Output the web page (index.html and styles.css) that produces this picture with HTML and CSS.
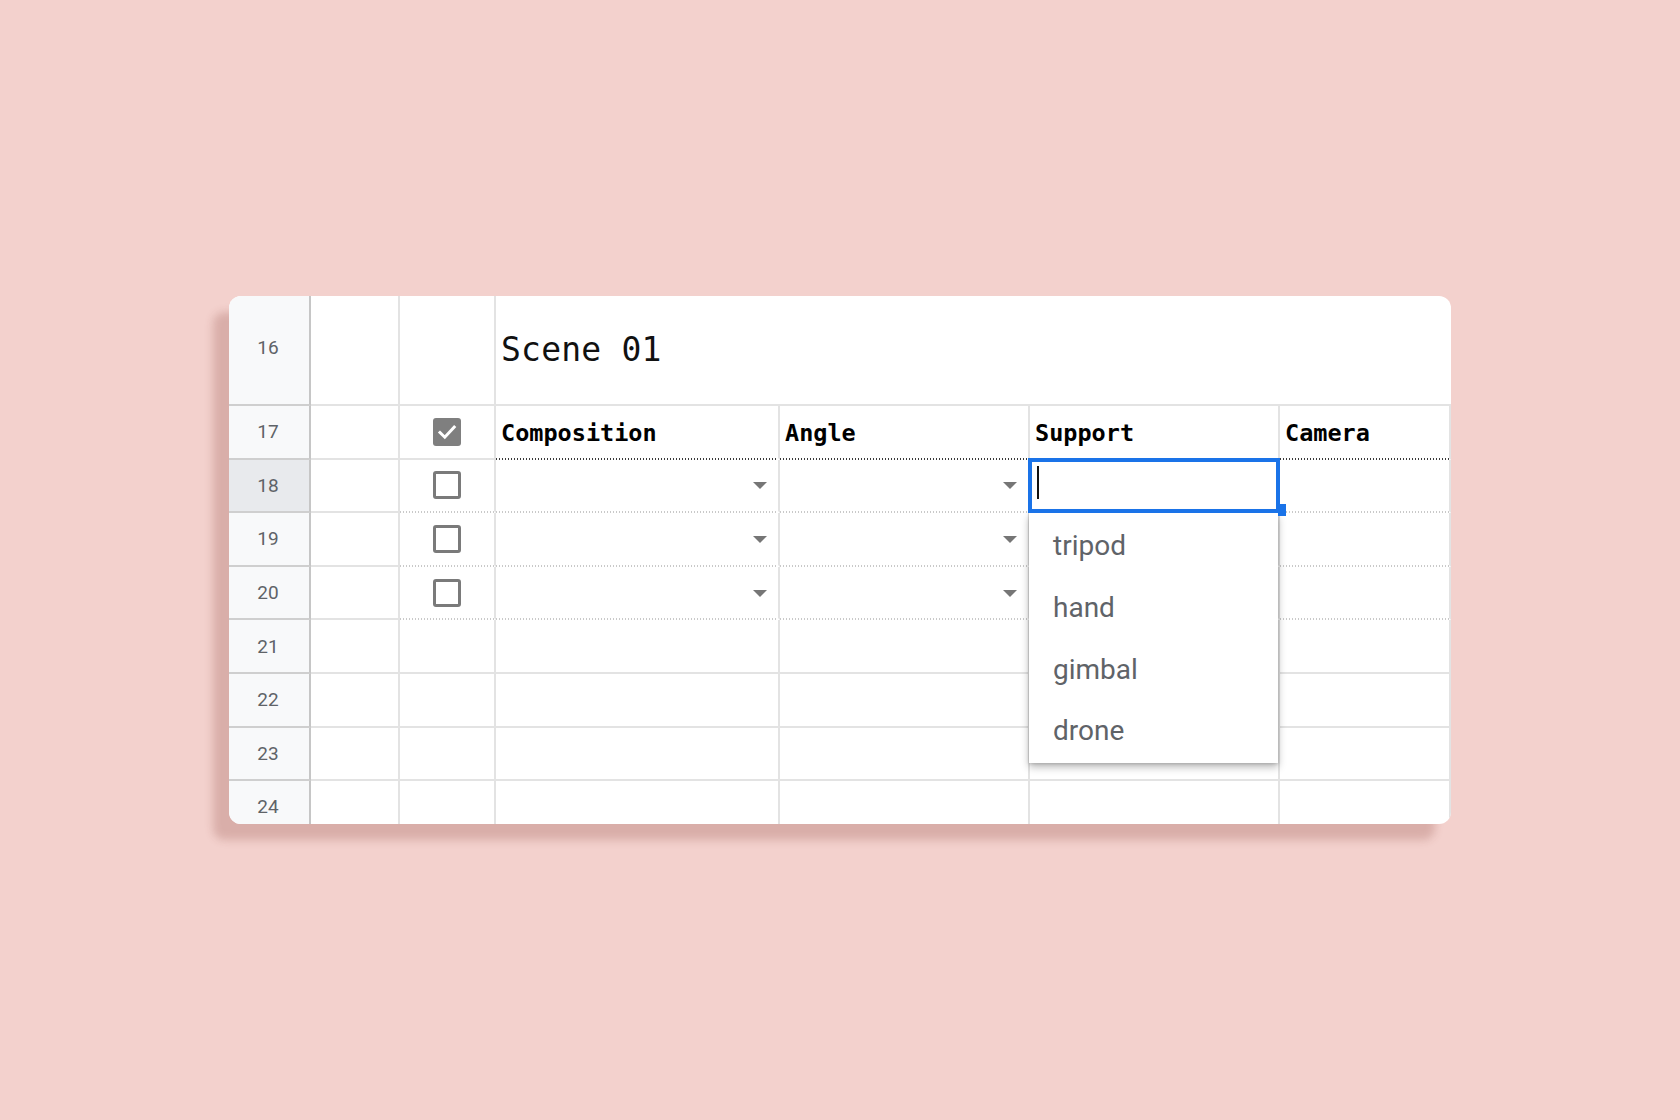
FILE: index.html
```html
<!DOCTYPE html>
<html>
<head>
<meta charset="utf-8">
<link rel="stylesheet" href="styles.css">
</head>
<body>
<div class="card">
  <div class="grid">
    <!-- row 16 -->
    <div class="rh up">16</div>
    <div class="c"></div>
    <div class="c"></div>
    <div class="c title">Scene 01</div>
    <!-- row 17 -->
    <div class="rh">17</div>
    <div class="c"></div>
    <div class="c cb"><span class="box on"><svg viewBox="0 0 28 28" width="28" height="28"><path d="M7 14.5 L11.8 19.2 L21.2 9" fill="none" stroke="#fff" stroke-width="3" stroke-linecap="square"/></svg></span></div>
    <div class="c hd db">Composition</div>
    <div class="c hd db">Angle</div>
    <div class="c hd db">Support</div>
    <div class="c hd db">Camera</div>
    <!-- row 18 -->
    <div class="rh sel">18</div>
    <div class="c"></div>
    <div class="c cb lb"><span class="box"></span></div>
    <div class="c dd lb"><span class="arrow"></span></div>
    <div class="c dd lb"><span class="arrow"></span></div>
    <div class="c lb active">
      <div class="focus"><span class="caret"></span><span class="handle"></span></div>
      <div class="menu">
        <div class="item">tripod</div>
        <div class="item">hand</div>
        <div class="item">gimbal</div>
        <div class="item">drone</div>
      </div>
    </div>
    <div class="c lb"></div>
    <!-- row 19 -->
    <div class="rh">19</div>
    <div class="c"></div>
    <div class="c cb lb"><span class="box"></span></div>
    <div class="c dd lb"><span class="arrow"></span></div>
    <div class="c dd lb"><span class="arrow"></span></div>
    <div class="c lb"></div>
    <div class="c lb"></div>
    <!-- row 20 -->
    <div class="rh">20</div>
    <div class="c"></div>
    <div class="c cb lb"><span class="box"></span></div>
    <div class="c dd lb"><span class="arrow"></span></div>
    <div class="c dd lb"><span class="arrow"></span></div>
    <div class="c lb"></div>
    <div class="c lb"></div>
    <!-- row 21 -->
    <div class="rh">21</div>
    <div class="c"></div><div class="c"></div><div class="c"></div><div class="c"></div><div class="c"></div><div class="c"></div>
    <!-- row 22 -->
    <div class="rh">22</div>
    <div class="c"></div><div class="c"></div><div class="c"></div><div class="c"></div><div class="c"></div><div class="c"></div>
    <!-- row 23 -->
    <div class="rh">23</div>
    <div class="c"></div><div class="c"></div><div class="c"></div><div class="c"></div><div class="c"></div><div class="c"></div>
    <!-- row 24 -->
    <div class="rh">24</div>
    <div class="c"></div><div class="c"></div><div class="c"></div><div class="c"></div><div class="c"></div><div class="c"></div>
  </div>
</div>
</body>
</html>
```

FILE: styles.css
```css
html, body {
  margin: 0;
  padding: 0;
  background: #f3d1cd;
  width: 1680px;
  height: 1120px;
  overflow: hidden;
}

body {
  padding-top: 296px;
  padding-left: 229px;
  box-sizing: border-box;
  font-family: Roboto, "Liberation Sans", sans-serif;
}

.card {
  width: 1222px;
  height: 528px;
  background: #fff;
  border-radius: 12px;
  overflow: hidden;
  box-shadow: -16px 16px 8px rgba(125, 45, 40, 0.21);
}

.grid {
  display: grid;
  grid-template-columns: 82px 89px 96px 284px 250px 250px 171px;
  grid-template-rows: 110px repeat(8, 53.6px);
}

.c, .rh {
  box-sizing: border-box;
  border-right: 2px solid #e3e3e3;
  border-bottom: 2px solid #e3e3e3;
  position: relative;
}

.rh {
  background: #f8f9fa;
  border-right-color: #c6c6c6;
  border-bottom-color: #cfcfcf;
  display: flex;
  align-items: center;
  justify-content: center;
  font-size: 19px;
  color: #5f6368;
  padding-right: 2px;
}

.rh.up {
  padding-bottom: 6px;
}

.rh.sel {
  background: #e8eaed;
}

.title {
  grid-column: 4 / 8;
  border-right: none;
  display: flex;
  align-items: center;
  padding-left: 5px;
  padding-bottom: 2px;
  font-family: "DejaVu Sans Mono", "Liberation Mono", monospace;
  font-size: 33px;
  color: #111;
  letter-spacing: 0.2px;
}

.hd {
  display: flex;
  align-items: center;
  padding-left: 5px;
  padding-top: 2px;
  font-family: "DejaVu Sans Mono", "Liberation Mono", monospace;
  font-weight: bold;
  font-size: 23.5px;
  color: #000;
}

.db {
  border-bottom-color: transparent;
  background-image: linear-gradient(to right, #3a3a3a 50%, transparent 50%);
  background-origin: border-box;
  background-size: 3px 2px;
  background-repeat: repeat-x;
  background-position: left bottom;
}

.lb {
  border-bottom-color: transparent;
  background-image: linear-gradient(to right, #c9c9c9 50%, transparent 50%);
  background-origin: border-box;
  background-size: 3px 2px;
  background-repeat: repeat-x;
  background-position: left bottom;
}

.cb {
  display: flex;
  align-items: center;
  justify-content: center;
  padding-right: 1px;
}

.box {
  width: 28px;
  height: 28px;
  box-sizing: border-box;
  border: 3px solid #7a7a7a;
  border-radius: 3px;
  display: block;
}

.box.on {
  border: none;
  background: #7f7f7f;
}

.box svg {
  display: block;
}

.dd {
  display: flex;
  align-items: center;
  justify-content: flex-end;
  padding-right: 11px;
}

.arrow {
  width: 0;
  height: 0;
  border-left: 7px solid transparent;
  border-right: 7px solid transparent;
  border-top: 7px solid #767676;
  margin-top: 1px;
}

.active {
  z-index: 2;
}

.focus {
  position: absolute;
  top: -2px;
  left: -2px;
  right: -2px;
  bottom: -2px;
  border: 4px solid #1a73e8;
  box-sizing: border-box;
  z-index: 3;
}

.caret {
  position: absolute;
  left: 5px;
  top: 4px;
  width: 2px;
  height: 33px;
  background: #111;
}

.handle {
  position: absolute;
  right: -10px;
  bottom: -7px;
  width: 8px;
  height: 12px;
  background: #1a73e8;
}

.menu {
  position: absolute;
  top: calc(100% + 2px);
  left: -1px;
  width: 249px;
  height: 250px;
  background: #fff;
  box-shadow: 0 4px 8px rgba(0, 0, 0, 0.28), 0 1px 3px rgba(0, 0, 0, 0.15);
  padding: 2px 0;
  box-sizing: border-box;
  z-index: 2;
}

.item {
  height: 61.6px;
  display: flex;
  align-items: center;
  padding-left: 24px;
  font-family: Roboto, "Liberation Sans", sans-serif;
  font-size: 28px;
  color: #5f6368;
}
```
